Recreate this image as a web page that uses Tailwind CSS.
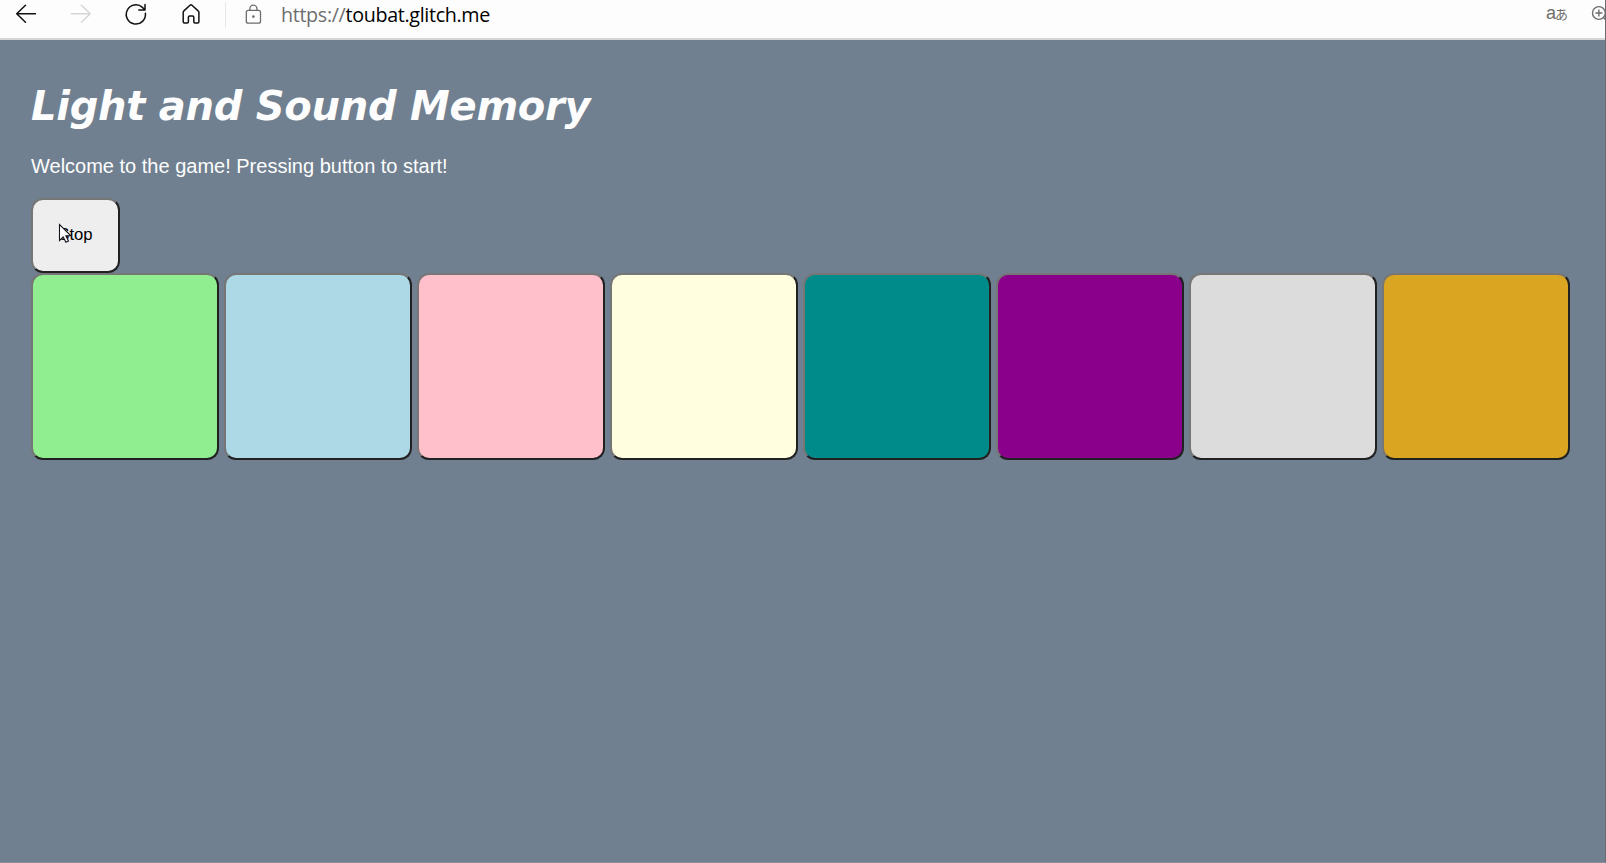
<!DOCTYPE html>
<html lang="en">
<head>
<meta charset="utf-8">
<title>Light and Sound Memory</title>
<script src="https://cdn.jsdelivr.net/npm/@tailwindcss/browser@4"></script>
</head>
<body class="relative flex h-[863px] w-[1606px] flex-col overflow-hidden bg-[#708090]">
<header class="flex h-10 shrink-0 overflow-hidden border-b-2 border-[#d6d6d6] bg-[#fdfdfd]">
  <svg class="h-[38px] w-[270px] shrink-0" viewBox="0 0 270 38" fill="none" stroke="#111" stroke-width="1.5" stroke-linecap="round" stroke-linejoin="round">
    <path d="M35.5 13.8H16.7M25.5 5.3L16.7 13.8L25.5 22.3"/>
    <path stroke="#d6d6d6" d="M71.3 13.8H90.2M81.4 5.3L90.2 13.8L81.4 22.3"/>
    <path d="M145.4 13.2A9.6 9.6 0 1 1 142.4 7.4L144.8 9.7M145 4.6V9.9H138.8"/>
    <path d="M183.2 12.3Q183.2 11.5 183.9 10.9L190 5.3Q191 4.4 192 5.3L198.1 10.9Q198.9 11.5 198.9 12.3V21.7Q198.9 22.9 197.7 22.9H195Q193.8 22.9 193.8 21.7V17.2Q193.8 16 192.6 16H189.6Q188.4 16 188.4 17.2V21.7Q188.4 22.9 187.2 22.9H184.4Q183.2 22.9 183.2 21.7Z"/>
    <path stroke="#e8e8e8" stroke-width="1" stroke-linecap="butt" d="M225.5 2V28"/>
    <g stroke="#6d6d6d" stroke-width="1.3"><rect x="246.3" y="10.3" width="14.2" height="12.9" rx="2"/><path d="M249.9 10V8.6a3.5 3.5 0 0 1 7 0V10"/></g>
    <circle cx="253.4" cy="16.6" r="1.3" fill="#6d6d6d" stroke="none"/>
  </svg>
  <div class="ml-[11px] mt-px h-7 w-[230px] whitespace-nowrap text-[19.7px]/[28px] tracking-[-0.33px] text-black" style="font-family:'Open Sans','Noto Sans',sans-serif"><span class="text-[#6d6d6d]">https://</span>toubat.glitch.me</div>
  <div class="ml-auto mr-[24px] flex h-7 items-baseline whitespace-nowrap text-[#6d6d6d]"><span class="text-[18px]/[26px]" style="font-family:'Liberation Sans',sans-serif">a</span><span class="-ml-px text-[13px]/[26px]" style="font-family:'Noto Sans CJK JP',sans-serif">あ</span></div>
  <svg class="-mr-[6px] h-[38px] w-[20px] shrink-0" viewBox="1592 0 20 38" overflow="visible" fill="none" stroke="#6d6d6d" stroke-width="1.4"><circle cx="1598.9" cy="13" r="6.4"/><path d="M1595.4 13H1602.4M1598.9 9.5V16.5M1603.4 17.5L1608 22"/></svg>
</header>
<main class="flex flex-col items-start pl-[31px]">
  <h1 class="mt-[42px] h-12 whitespace-nowrap text-[40px]/[48px] font-bold italic tracking-[-0.26px] text-[#fdfdfd]" style="font-family:Verdana,'DejaVu Sans',sans-serif">Light and Sound Memory</h1>
  <p class="mt-[24px] h-6 whitespace-nowrap text-[20px]/[24px] text-[#fdfdfd]" style="font-family:'Liberation Sans',Arial,sans-serif">Welcome to the game! Pressing button to start!</p>
  <div class="relative mt-5 h-[75px]">
    <button class="h-[75px] w-[89px] rounded-[12px] border-2 border-t-[#767676] border-r-[#212121] border-b-[#212121] border-l-[#767676] bg-[#eeeeee] pb-[2px] text-[16.67px] text-black" style="font-family:'Liberation Sans',Arial,sans-serif">Stop</button>
    <svg class="absolute left-[27px] top-[25px] h-[22px] w-[15px]" viewBox="0 0 15 22" fill="#fff" stroke="#151520" stroke-width="1.1"><path d="M1.5 1.5V17.5L5.2 14L7.9 19.3L10.5 18L7.9 12.8H12.9Z"/></svg>
  </div>
  <div class="flex gap-[5px]">
    <button class="h-[187px] w-[188px] rounded-[12px] border-2 border-t-[#767676] border-r-[#212121] border-b-[#212121] border-l-[#767676] bg-[#90ee90]"></button>
    <button class="h-[187px] w-[188px] rounded-[12px] border-2 border-t-[#767676] border-r-[#212121] border-b-[#212121] border-l-[#767676] bg-[#add8e6]"></button>
    <button class="h-[187px] w-[188px] rounded-[12px] border-2 border-t-[#767676] border-r-[#212121] border-b-[#212121] border-l-[#767676] bg-[#ffc0cb]"></button>
    <button class="h-[187px] w-[188px] rounded-[12px] border-2 border-t-[#767676] border-r-[#212121] border-b-[#212121] border-l-[#767676] bg-[#ffffe0]"></button>
    <button class="h-[187px] w-[188px] rounded-[12px] border-2 border-t-[#767676] border-r-[#212121] border-b-[#212121] border-l-[#767676] bg-[#008b8b]"></button>
    <button class="h-[187px] w-[188px] rounded-[12px] border-2 border-t-[#767676] border-r-[#212121] border-b-[#212121] border-l-[#767676] bg-[#8b008b]"></button>
    <button class="h-[187px] w-[188px] rounded-[12px] border-2 border-t-[#767676] border-r-[#212121] border-b-[#212121] border-l-[#767676] bg-[#dcdcdc]"></button>
    <button class="h-[187px] w-[188px] rounded-[12px] border-2 border-t-[#767676] border-r-[#212121] border-b-[#212121] border-l-[#767676] bg-[#daa520]"></button>
  </div>
</main>
<div class="pointer-events-none absolute inset-0 border-b border-r border-b-[#8c9097] border-r-[#686c72]"></div>
</body>
</html>
